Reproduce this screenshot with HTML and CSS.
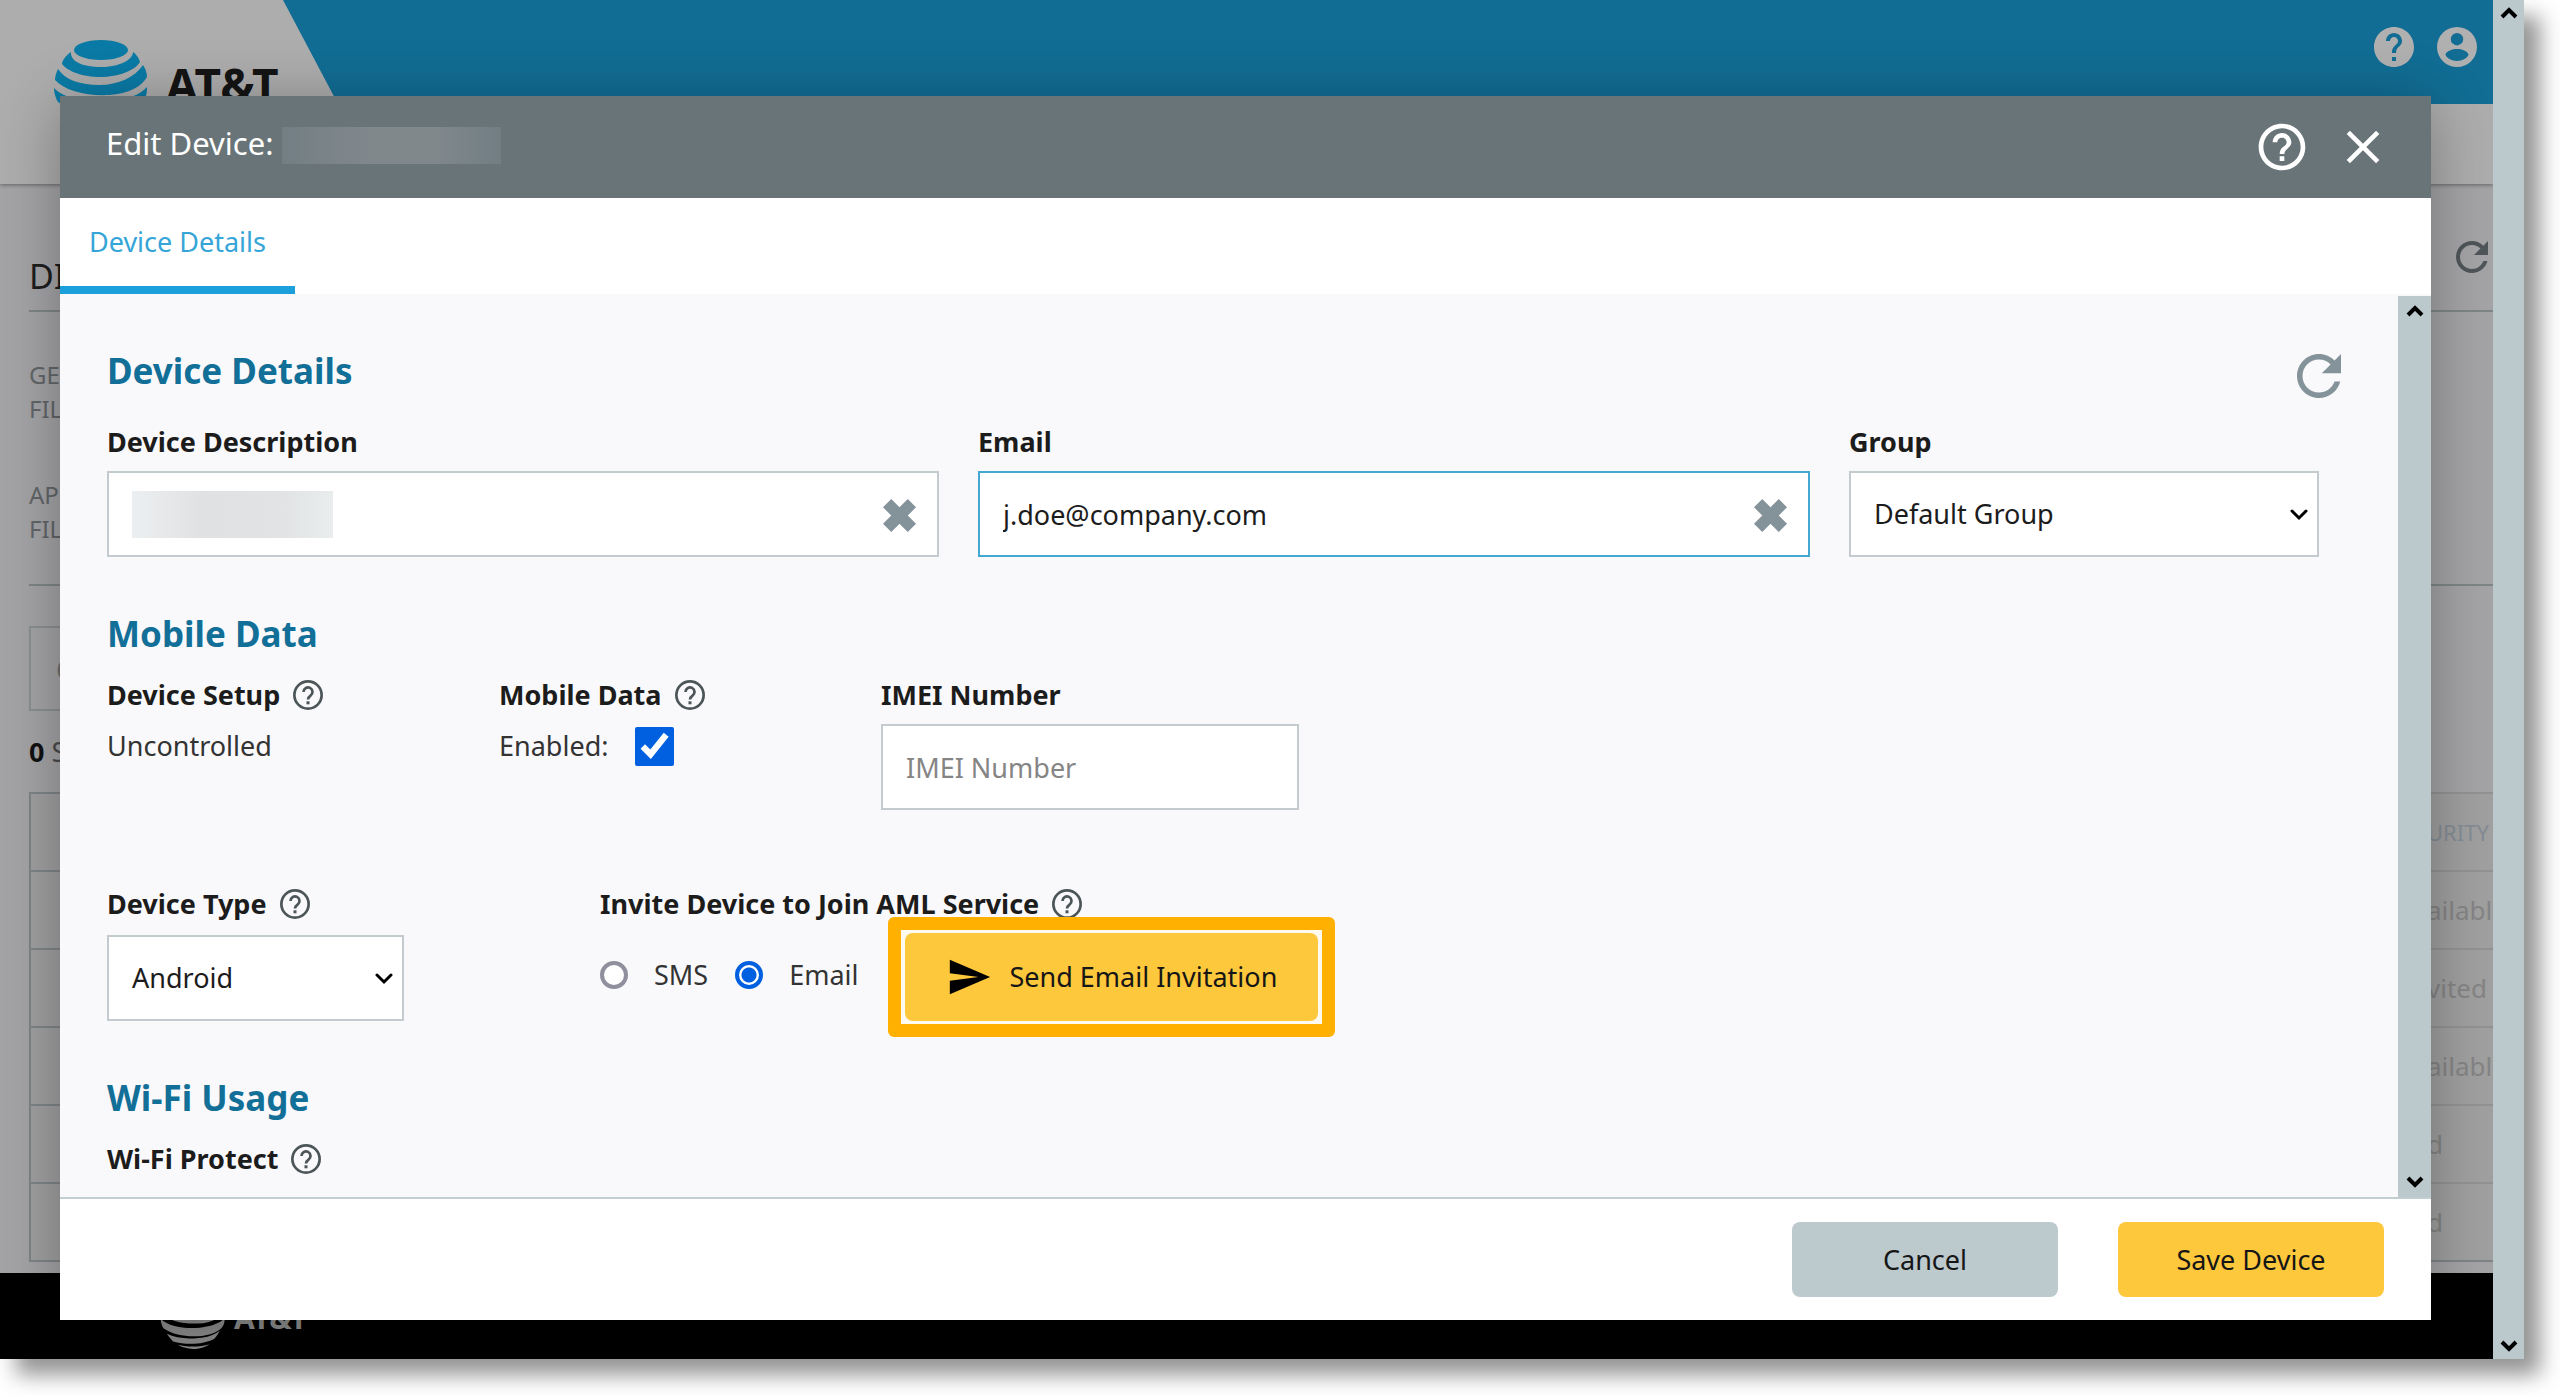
FILE: index.html
```html
<!DOCTYPE html>
<html lang="en">
<head>
<meta charset="utf-8">
<title>Edit Device</title>
<link rel="stylesheet" href="styles.css">
</head>
<body>
<svg class="defs" aria-hidden="true">
  <symbol id="help" viewBox="0 0 24 24"><path d="M11 18h2v-2h-2v2zm1-16C6.48 2 2 6.48 2 12s4.480 10 10 10 10-4.480 10-10S17.520 2 12 2zm0 18c-4.410 0-8-3.590-8-8s3.590-8 8-8 8 3.590 8 8-3.590 8-8 8zm0-14c-2.210 0-4 1.790-4 4h2c0-1.100.9-2 2-2s2 .9 2 2c0 2-3 1.750-3 5h2c0-2.250 3-2.500 3-5 0-2.210-1.790-4-4-4z"/></symbol>
  <symbol id="help-thin" viewBox="0 0 24 24"><circle cx="12" cy="12" r="9.100" fill="none" stroke="currentColor" stroke-width="1.800"/><path d="M9 10a3 3 0 1 1 4.700 2.400C12.600 13.200 12 13.700 12 15" fill="none" stroke="currentColor" stroke-width="1.800"/><path d="M11 16.200h2v2h-2z"/></symbol>
  <symbol id="help-solid" viewBox="0 0 24 24"><path d="M12 2C6.480 2 2 6.480 2 12s4.480 10 10 10 10-4.480 10-10S17.520 2 12 2zm1 17h-2v-2h2v2zm2.070-7.750l-.9.920C13.450 12.900 13 13.500 13 15h-2v-.5c0-1.100.45-2.100 1.170-2.830l1.240-1.260c.37-.36.59-.86.59-1.410 0-1.100-.9-2-2-2s-2 .9-2 2H8c0-2.210 1.790-4 4-4s4 1.790 4 4c0 .88-.36 1.680-.93 2.250z"/></symbol>
  <symbol id="account" viewBox="0 0 24 24"><path fill-rule="evenodd" d="M12 2a10 10 0 1 0 0 20 10 10 0 0 0 0-20zm0 3a3 3 0 1 1 0 6.200 3 3 0 0 1 0-6.200zm0 14c-2.600 0-4.700-1.100-5.800-3.100C6.600 13.900 9.800 13 12 13s5.400.9 5.800 2.900C16.700 17.900 14.600 19 12 19z"/></symbol>
  <symbol id="refresh" viewBox="0 0 24 24"><path d="M17.650 6.350C16.200 4.900 14.210 4 12 4c-4.420 0-7.990 3.580-7.990 8s3.570 8 7.990 8c3.730 0 6.840-2.550 7.730-6h-2.080c-.82 2.330-3.040 4-5.650 4-3.310 0-6-2.690-6-6s2.690-6 6-6c1.660 0 3.140.69 4.220 1.780L13 11h7V4l-2.350 2.350z"/></symbol>
  <symbol id="close" viewBox="0 0 24 24"><path d="M19 6.410L17.590 5 12 10.590 6.410 5 5 6.410 10.590 12 5 17.590 6.410 19 12 13.410 17.590 19 19 17.590 13.410 12z"/></symbol>
  <symbol id="send" viewBox="0 0 24 24"><path d="M2 21L23 12 2 3v7l15 2-15 2z"/></symbol>
  <symbol id="clear" viewBox="0 0 32 32"><path d="M8 0l8 8 8-8 8 8-8 8 8 8-8 8-8-8-8 8-8-8 8-8-8-8z"/></symbol>
  <symbol id="chevron-up" viewBox="0 0 18 18"><path d="M2 12l7-7 7 7" fill="none" stroke="#000" stroke-width="4"/></symbol>
  <symbol id="chevron-down" viewBox="0 0 18 18"><path d="M2 6l7 7 7-7" fill="none" stroke="#000" stroke-width="4"/></symbol>
  <symbol id="caret" viewBox="0 0 18 18"><path d="M2 6l7 7 7-7" fill="none" stroke="#000" stroke-width="3" stroke-linecap="round"/></symbol>
  <symbol id="globe" viewBox="0 0 96 96">
    <ellipse cx="48" cy="11" rx="27" ry="10"/>
    <path d="M18 13C12 17 9 22 9 25c6 8 24 14 42 13 18-1 32-8 36-15-1-4-4-8-7-10 0 8-14 15-32 15-17 0-31-5-30-15z"/>
    <path d="M5 30C3 34 2 38 2 41c10 11 31 16 54 15 20-1 33-9 38-18 0-5-2-9-4-12-8 12-24 20-44 20C28 46 12 41 5 30z"/>
    <path d="M1 49c0 5 2 11 4 14 16 11 38 13 56 11 15-2 27-7 31-15 2-4 2-7 2-11-7 8-19 12-36 14C35 64 11 60 1 49z"/>
    <path d="M10 71c3 5 6 8 9 11 20 6 46 4 60-4 4-4 7-9 8-12-8 7-19 10-31 11-17 2-34 0-46-6z"/>
    <path d="M26 87c4 3 14 6 22 6 9 0 18-3 24-7-12 4-32 5-46 1z"/>
  </symbol>
</svg>

<div class="window">
  <div class="page">
    <header class="site-header">
      <a class="brand" href="#"><svg class="brand-globe"><use href="#globe"/></svg>AT&amp;T</a>
      <nav class="site-bar">
        <button class="icon-btn" aria-label="Help"><svg class="icon-48"><use href="#help-solid"/></svg></button>
        <button class="icon-btn" aria-label="Account"><svg class="icon-48"><use href="#account"/></svg></button>
      </nav>
    </header>
    <main class="devices">
      <div class="devices-title"><span>DI</span><svg class="icon-48"><use href="#refresh"/></svg></div>
      <div class="filters"><p>GE<br>FIL</p><p>AP<br>FIL</p></div>
      <div class="search">Q</div>
      <p class="selected"><b>0</b> S</p>
      <table class="list">
        <tr><th></th><th class="last head">URITY</th></tr>
        <tr><td></td><td class="last">ailable</td></tr>
        <tr><td></td><td class="last">vited</td></tr>
        <tr><td></td><td class="last">ailable</td></tr>
        <tr><td></td><td class="last">d</td></tr>
        <tr><td></td><td class="last">d</td></tr>
      </table>
    </main>
    <footer class="site-footer"><svg class="footer-globe"><use href="#globe"/></svg>AT&amp;T</footer>
  </div>
  <div class="scrollbar"><svg><use href="#chevron-up"/></svg><svg><use href="#chevron-down"/></svg></div>

  <div class="overlay">
    <section class="modal" role="dialog" aria-labelledby="title">
      <header class="modal-header">
        <h1 id="title">Edit Device:</h1><span class="redacted-title"></span>
        <button class="icon-btn" aria-label="Help"><svg class="icon-56"><use href="#help"/></svg></button>
        <button class="icon-btn" aria-label="Close"><svg class="icon-56"><use href="#close"/></svg></button>
      </header>
      <nav class="tabs"><button class="tab">Device Details</button></nav>
      <div class="modal-main">
        <form class="form">
          <div class="section-head"><h2>Device Details</h2><button type="button" class="icon-btn refresh" aria-label="Refresh"><svg><use href="#refresh"/></svg></button></div>
          <div class="fields">
            <div class="field">
              <label for="desc">Device Description</label>
              <div class="box"><input id="desc" type="text"><span class="redacted"></span><button type="button" class="icon-btn clear" aria-label="Clear"><svg><use href="#clear"/></svg></button></div>
            </div>
            <div class="field">
              <label for="email">Email</label>
              <div class="box"><input id="email" class="active" type="text" value="j.doe@company.com"><button type="button" class="icon-btn clear" aria-label="Clear"><svg><use href="#clear"/></svg></button></div>
            </div>
            <div class="field">
              <label for="group">Group</label>
              <div class="box"><select id="group"><option>Default Group</option></select><svg class="caret"><use href="#caret"/></svg></div>
            </div>
          </div>

          <h2>Mobile Data</h2>
          <div class="mobile">
            <div class="field"><span class="label">Device Setup <svg class="tip"><use href="#help-thin"/></svg></span><div class="line">Uncontrolled</div></div>
            <div class="field"><span class="label">Mobile Data <svg class="tip"><use href="#help-thin"/></svg></span><div class="line"><label class="plain" for="enabled">Enabled:</label><input id="enabled" type="checkbox" checked></div></div>
            <div class="field"><label for="imei">IMEI Number</label><div class="box"><input id="imei" type="text" placeholder="IMEI Number"></div></div>
          </div>
          <div class="invite">
            <div class="field">
              <label for="type">Device Type <svg class="tip"><use href="#help-thin"/></svg></label>
              <div class="box"><select id="type"><option>Android</option></select><svg class="caret"><use href="#caret"/></svg></div>
            </div>
            <div class="field">
              <span class="label">Invite Device to Join AML Service <svg class="tip"><use href="#help-thin"/></svg></span>
              <div class="options">
                <label class="plain option"><input type="radio" name="via">SMS</label>
                <label class="plain option"><input type="radio" name="via" checked>Email</label>
                <div class="highlight"><button type="button" class="btn send"><svg><use href="#send"/></svg>Send Email Invitation</button></div>
              </div>
            </div>
          </div>

          <h2>Wi-Fi Usage</h2>
          <span class="label protect">Wi-Fi Protect <svg class="tip"><use href="#help-thin"/></svg></span>
        </form>
        <div class="scrollbar inner"><svg><use href="#chevron-up"/></svg><svg><use href="#chevron-down"/></svg></div>
      </div>
      <footer class="modal-footer"><button class="btn cancel">Cancel</button><button class="btn save">Save Device</button></footer>
    </section>
  </div>
</div>
</body>
</html>
```
FILE: styles.css
```css
* { box-sizing: border-box; }
html, body { height: 100%; }
body {
  margin: 0;
  background: #fff;
  color: #333;
  font: 27px/40px "Noto Sans", sans-serif;
  overflow: hidden;
}
h1, h2, p { margin: 0; }
button, input, select { font: inherit; }
svg { display: block; flex: none; fill: currentColor; }
.defs { position: absolute; width: 0; height: 0; }
.icon-btn { padding: 0; border: 0; background: none; color: inherit; display: flex; }
.icon-48 { width: 48px; height: 48px; }
.icon-56 { width: 56px; height: 56px; }

.window {
  position: relative;
  display: flex;
  height: calc(100% - 37px);
  margin-right: 36px;
  box-shadow: 16px 16px 20px rgba(0, 0, 0, .42);
}

/* Dimmed page behind the dialog */
.page {
  flex: 1;
  min-width: 0;
  display: flex;
  flex-direction: column;
  overflow: hidden;
  background: #a4a4a7;
}
.site-header {
  display: flex;
  align-items: flex-start;
  height: 184px;
  background: #adadad;
  box-shadow: 0 1px 4px rgba(0, 0, 0, .4);
  flex: none;
}
.brand {
  display: flex;
  gap: 17px;
  width: 283px;
  padding: 39px 0 0 53px;
  color: #141414;
  font-size: 46px;
  font-weight: 700;
  line-height: 90px;
  text-decoration: none;
}
.brand-globe { width: 96px; height: 96px; color: #0a7ba6; }
.site-bar {
  flex: 1;
  display: flex;
  justify-content: flex-end;
  gap: 15px;
  height: 104px;
  padding: 23px 12px;
  background: #116d94;
  color: #b0b0b0;
  clip-path: polygon(0 0, 100% 0, 100% 100%, 55px 100%);
}
.devices { flex: 1; min-height: 0; overflow: hidden; padding-left: 29px; }
.devices-title {
  display: flex;
  justify-content: space-between;
  align-items: flex-end;
  height: 128px;
  padding-bottom: 14px;
  border-bottom: 2px solid #7f8587;
  color: #1d1d1d;
  font-size: 34px;
}
.devices-title svg { color: #4f5659; margin: 0 -3px 15px 0; }
.filters {
  display: flex;
  flex-direction: column;
  gap: 52px;
  height: 274px;
  padding-top: 46px;
  border-bottom: 2px solid #7f8587;
  color: #626668;
  font-size: 24px;
  line-height: 34px;
}
.search {
  height: 85px;
  margin: 40px 160px 0 0;
  padding: 22px 25px;
  border: 2px solid #8b9092;
  color: #6c6f70;
}
.selected { height: 81px; padding-top: 21px; color: #4b4b4b; }
.selected b { color: #111; }
.list {
  width: 100%;
  table-layout: fixed;
  border-collapse: collapse;
  border-left: 2px solid #7f8587;
  background: #a0a0a0;
}
.list th, .list td { height: 78px; padding: 0; border-top: 2px solid #7f8587; }
.list tr:last-child td { border-bottom: 2px solid #7f8587; }
.list .last {
  width: 66px;
  overflow: hidden;
  border-color: #939393;
  color: #858585;
  font-size: 26px;
  font-weight: 400;
  text-align: left;
  white-space: nowrap;
}
.list .head { color: #848c95; font-size: 22px; }
.site-footer {
  flex: none;
  display: flex;
  gap: 8px;
  height: 86px;
  padding: 12px 0 0 160px;
  background: #000;
  color: #8e8e8e;
  font-size: 30px;
  font-weight: 700;
  line-height: 66px;
}
.footer-globe { width: 66px; height: 66px; }

.scrollbar {
  flex: none;
  display: flex;
  flex-direction: column;
  justify-content: space-between;
  align-items: center;
  width: 31px;
  padding: 5px 0;
  background: #bbc9cd;
}
.scrollbar svg { width: 18px; height: 18px; }
.scrollbar.inner { width: 33px; margin-top: 2px; padding: 7px 0; }

/* Dialog */
.overlay {
  position: absolute;
  inset: 0 31px 0 0;
  display: flex;
  padding: 96px 62px 39px 60px;
  overflow: hidden;
}
.modal {
  flex: 1;
  min-width: 0;
  display: flex;
  flex-direction: column;
  background: #fff;
  box-shadow: 0 8px 56px rgba(0, 0, 0, .3);
}
.modal-header {
  flex: none;
  display: flex;
  align-items: center;
  gap: 25px;
  height: 102px;
  padding: 0 40px 0 46px;
  background: #697478;
  color: #fff;
}
.modal-header h1 { margin-right: -16px; padding-bottom: 9px; font-size: 31px; font-weight: 400; }
.redacted-title {
  width: 219px;
  height: 37px;
  margin: 0 auto 3px 0;
  background: linear-gradient(90deg, #727e84, #81888c 40%, #80888b 70%, #717e84);
}
.tabs { flex: none; height: 96px; display: flex; }
.tab {
  padding: 0 29px;
  border: 0;
  border-bottom: 8px solid #1ba0db;
  background: none;
  color: #35a5d8;
}
.modal-main { flex: 1; min-height: 0; display: flex; background: #f9f9fb; border-bottom: 2px solid #c3ced2; }
.form { flex: 1; min-width: 0; overflow: hidden; padding: 53px 79px 0 47px; }
h2 { color: #126f97; font-size: 35px; font-weight: 700; line-height: 48px; }
.section-head { display: flex; justify-content: space-between; margin-bottom: 27px; }
.refresh { height: 48px; margin-right: -33px; color: #84929a; }
.refresh svg { width: 66px; height: 66px; margin-top: -4px; }
.field { display: flex; flex-direction: column; }
.field label:not(.plain), .label {
  display: flex;
  align-items: center;
  gap: 10px;
  margin-bottom: 9px;
  color: #1c1c1c;
  font-weight: 700;
}
.tip { width: 36px; height: 36px; color: #4c5558; }
.fields {
  display: grid;
  grid-template-columns: 832fr 832fr 470fr;
  gap: 39px;
  margin-bottom: 53px;
}
.box { position: relative; display: flex; }
.box input, .box select {
  width: 100%;
  height: 86px;
  padding: 0 60px 0 23px;
  border: 2px solid #c3cbcf;
  border-radius: 0;
  background: #fff;
  color: #1c1c1c;
  appearance: none;
}
.box input.active { border-color: #45a8d0; }
.box input::placeholder { color: #858585; opacity: 1; }
.redacted {
  position: absolute;
  left: 25px;
  top: 20px;
  width: 201px;
  height: 47px;
  background: linear-gradient(90deg, #eceff1, #e0e1e2 35%, #e1e3e4 75%, #eaedee);
}
.clear { position: absolute; right: 23px; top: 28px; color: #84929a; }
.clear svg { width: 33px; height: 33px; }
.caret { position: absolute; right: 11px; top: 34px; width: 18px; height: 18px; }

.mobile {
  display: grid;
  grid-template-columns: 392px 382px 418px;
  margin: 17px 0 74px;
}
.line { display: flex; align-items: center; gap: 26px; height: 44px; }
input[type="checkbox"] { width: 39px; height: 39px; margin: 0; accent-color: #0060df; }
.invite { display: grid; grid-template-columns: 297px auto; gap: 196px; justify-content: start; margin-bottom: 53px; }
.invite .field label:not(.plain), .invite .label { margin-bottom: 11px; }
.options { display: flex; align-items: center; height: 80px; }
.option { display: flex; align-items: center; gap: 26px; margin-right: 27px; }
.option + .highlight { margin-left: 3px; }
input[type="radio"] {
  appearance: none;
  width: 28px;
  height: 28px;
  margin: 0;
  border: 4px solid #8f8f9d;
  border-radius: 50%;
  background: #fff;
}
input[type="radio"]:checked { border-color: #0060df; background: radial-gradient(#0060df 7px, #fff 8px); }
.highlight {
  position: relative;
  margin: -18px 0 -22px;
  padding: 3px 4px;
  border: 13px solid #ffb000;
  border-radius: 6px;
  background: #fffaf0;
}
.btn {
  height: 75px;
  padding: 0;
  border: 0;
  border-radius: 8px;
  background: #fdc83c;
  color: #161616;
}
.send { display: flex; align-items: center; gap: 17px; height: 88px; padding: 0 41px; }
.send svg { width: 46px; height: 46px; color: #000; }
.protect { margin-top: 17px; }
.modal-footer { flex: none; display: flex; justify-content: flex-end; gap: 60px; height: 121px; padding: 23px 47px; }
.modal-footer .btn { width: 266px; }
.cancel { background: #bcc9cd; }
```
